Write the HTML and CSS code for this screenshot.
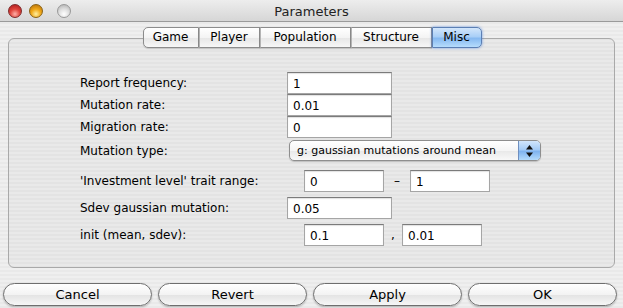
FILE: index.html
```html
<!DOCTYPE html>
<html lang="en">
<head>
    <meta charset="UTF-8">
    <title>Parameters</title>
    <link rel="stylesheet" href="styles.css">
</head>
<body>
    <div class="window">
        <div class="titlebar">
            <div class="lights">
                <span class="light red"></span>
                <span class="light yellow"></span>
                <span class="light grey"></span>
            </div>
            <div class="title">Parameters</div>
        </div>
        <div class="content">
            <div class="group">
                <div class="tabs">
                    <div class="tab tab-game">Game</div>
                    <div class="tab tab-player">Player</div>
                    <div class="tab tab-population">Population</div>
                    <div class="tab tab-structure">Structure</div>
                    <div class="tab tab-misc active">Misc</div>
                </div>
                <div class="form">
                    <div class="row">
                        <label>Report frequency:</label>
                        <input class="field" type="text" value="1">
                    </div>
                    <div class="row">
                        <label>Mutation rate:</label>
                        <input class="field" type="text" value="0.01">
                    </div>
                    <div class="row">
                        <label>Migration rate:</label>
                        <input class="field" type="text" value="0">
                    </div>
                    <div class="row row-popup">
                        <label>Mutation type:</label>
                        <div class="popup">
                            <span class="popup-text">g: gaussian mutations around mean</span>
                            <span class="popup-arrows">
                                <svg width="9" height="14" viewBox="0 0 9 14">
                                    <path d="M4.5 1 L8 5.5 L1 5.5 Z" fill="#111"/>
                                    <path d="M4.5 13 L8 8.5 L1 8.5 Z" fill="#111"/>
                                </svg>
                            </span>
                        </div>
                    </div>
                    <div class="row row-pair row-range">
                        <label>'Investment level' trait range:</label>
                        <input class="field small" type="text" value="0">
                        <span class="sep dash">–</span>
                        <input class="field small" type="text" value="1">
                    </div>
                    <div class="row row-sdev">
                        <label>Sdev gaussian mutation:</label>
                        <input class="field" type="text" value="0.05">
                    </div>
                    <div class="row row-pair row-init">
                        <label>init (mean, sdev):</label>
                        <input class="field small" type="text" value="0.1">
                        <span class="sep comma">,</span>
                        <input class="field small" type="text" value="0.01">
                    </div>
                </div>
            </div>
            <div class="buttons">
                <button class="btn">Cancel</button>
                <button class="btn">Revert</button>
                <button class="btn">Apply</button>
                <button class="btn">OK</button>
            </div>
        </div>
    </div>
</body>
</html>
```
FILE: styles.css
```css
body {
    margin: 0;
    padding: 0;
    font-family: "DejaVu Sans", "Lucida Grande", sans-serif;
    font-size: 12px;
    color: #000;
    background: #ececec;
}
.window {
    width: 623px;
    height: 308px;
    overflow: hidden;
    background: repeating-linear-gradient(to bottom, #efefef 0, #efefef 2px, #e9e9e9 2px, #e9e9e9 4px);
}
.titlebar {
    position: relative;
    height: 21px;
    border-bottom: 1px solid #9a9a9a;
    background: linear-gradient(to bottom, #ededed, #d6d6d6);
}
.lights {
    position: absolute;
    top: 4px;
    left: 8px;
    display: flex;
    gap: 7px;
}
.light {
    width: 14px;
    height: 14px;
    border-radius: 50%;
    box-sizing: border-box;
}
.light.red {
    background: radial-gradient(circle at 50% 75%, #ffb0a8 0, #e0453c 45%, #a8151a 100%);
    border: 1px solid #7d2a2a;
}
.light.yellow {
    background: radial-gradient(circle at 50% 75%, #fff0a0 0, #f0a818 45%, #b06a08 100%);
    border: 1px solid #8a6214;
}
.light.grey {
    margin-left: 7px;
    background: radial-gradient(circle at 50% 75%, #ffffff 0, #dcdcdc 50%, #aaaaaa 100%);
    border: 1px solid #999;
}
.title {
    text-align: center;
    line-height: 23px;
    font-size: 13px;
    color: #222;
}
.content {
    padding: 16px 6px 0 8px;
}
.group {
    width: 605px;
    height: 228px;
    border: 1px solid #a9a9a9;
    border-radius: 6px;
    background: rgba(0, 0, 0, 0.025);
}
.tabs {
    display: flex;
    justify-content: center;
    margin-top: -12px;
    margin-left: 1px;
}
.tab {
    height: 19px;
    line-height: 19px;
    text-align: center;
    border: 1px solid #8c8c8c;
    border-left: 1px solid #b4b4b4;
    background: linear-gradient(to bottom, #ffffff 0, #f4f4f4 50%, #e6e6e6 51%, #f7f7f7 100%);
    box-shadow: 0 1px 1px rgba(0, 0, 0, 0.15);
}
.tab-game {
    width: 54px;
    border-left: 1px solid #8c8c8c;
    border-radius: 5px 0 0 5px;
}
.tab-player { width: 59px; }
.tab-population { width: 89px; }
.tab-structure { width: 79px; }
.tab-misc {
    width: 48px;
    border-radius: 0 5px 5px 0;
}
.tab.active {
    border-color: #5b7fb4;
    background: linear-gradient(to bottom, #d3e6fb 0, #a9cff7 45%, #86b9f1 55%, #b6dcfc 100%);
    box-shadow: 0 0 3px rgba(60, 120, 220, 0.7);
}
.form {
    margin-top: 24px;
    padding-left: 71px;
}
.row {
    display: flex;
    align-items: center;
    height: 22px;
}
.row label {
    width: 207px;
    flex-shrink: 0;
}
.field {
    box-sizing: border-box;
    width: 105px;
    height: 22px;
    margin: 0;
    padding: 1px 0 0 5px;
    font-family: inherit;
    font-size: 12px;
    color: #000;
    background: #fff;
    border: 1px solid #a5a5a5;
    border-top-color: #7b7b7b;
    box-shadow: inset 0 1px 1px rgba(0, 0, 0, 0.12);
    outline: none;
}
.field.small {
    width: 80px;
}
.row-popup {
    margin-top: 2px;
    height: 21px;
}
.popup {
    box-sizing: border-box;
    display: flex;
    width: 252px;
    height: 21px;
    margin-left: 2px;
    border: 1px solid #8e8e8e;
    border-radius: 5px;
    overflow: hidden;
    background: linear-gradient(to bottom, #ffffff 0, #f5f5f5 50%, #e8e8e8 51%, #f8f8f8 100%);
    box-shadow: 0 1px 1px rgba(0, 0, 0, 0.18);
}
.popup-text {
    flex: 1;
    font-size: 11px;
    line-height: 19px;
    padding-left: 7px;
}
.popup-arrows {
    width: 21px;
    display: flex;
    align-items: center;
    justify-content: center;
    border-left: 1px solid #6f8fbf;
    background: linear-gradient(to bottom, #d1e5fb 0, #a4cbf6 45%, #7fb3ef 55%, #b3dafc 100%);
}
.row-range {
    margin-top: 9px;
}
.row-pair .field:first-of-type {
    margin-left: 17px;
}
.sep {
    text-align: center;
}
.dash {
    width: 26px;
}
.comma {
    width: 18px;
}
.row-sdev {
    margin-top: 5px;
}
.row-init {
    margin-top: 5px;
}
.buttons {
    display: flex;
    gap: 6px;
    margin: 15px 0 0 -5px;
}
.btn {
    box-sizing: border-box;
    width: 149px;
    height: 23px;
    padding: 0;
    font-family: inherit;
    font-size: 13px;
    color: #000;
    border: 1px solid #6e6e6e;
    border-radius: 12px;
    background: linear-gradient(to bottom, #ffffff 0, #f3f3f3 50%, #e3e3e3 51%, #f6f6f6 100%);
    box-shadow: 0 1px 2px rgba(0, 0, 0, 0.25);
}
```
